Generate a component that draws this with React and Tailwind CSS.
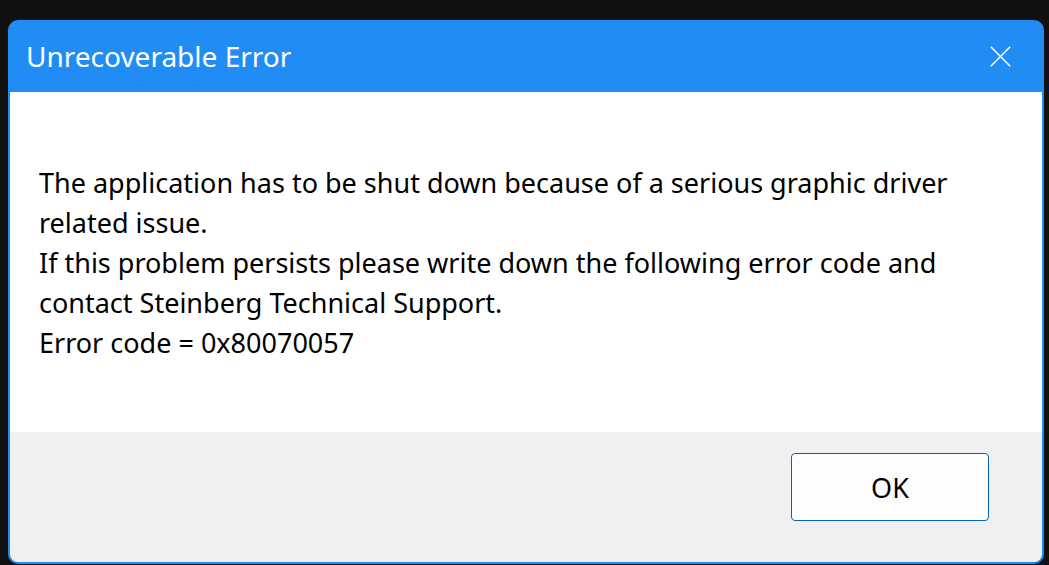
export default function App() {
    const font = {fontFamily: '"Noto Sans", "Open Sans", sans-serif'};

    return (
        <div className="w-[1049px] h-[565px] bg-[#111111] overflow-hidden" style={font}>
            <div className="ml-[8px] mt-[20px] w-[1036px] h-[544px] flex flex-col rounded-[10px] bg-[#228cf5] p-[2px] pt-0 overflow-hidden">
                {/* Title bar */}
                <div className="h-[72px] shrink-0 flex items-center justify-between pl-[16px] pr-[31px]">
                    <span className="text-white text-[28px] leading-none">Unrecoverable Error</span>
                    <svg width="21" height="21" viewBox="0 0 21 21" className="text-white">
                        <path d="M0.8 0.8 L20.2 20.2 M20.2 0.8 L0.8 20.2" stroke="currentColor" strokeWidth="1.5" fill="none"/>
                    </svg>
                </div>
                {/* Message */}
                <div className="h-[340px] shrink-0 bg-white pl-[29px] pt-[71px] text-[27px] leading-[40px] text-black">
                    <p>The application has to be shut down because of a serious graphic driver</p>
                    <p>related issue.</p>
                    <p>If this problem persists please write down the following error code and</p>
                    <p>contact Steinberg Technical Support.</p>
                    <p>Error code = 0x80070057</p>
                </div>
                {/* Footer */}
                <div className="flex-1 bg-[#f0f0f0] rounded-b-[8px] flex justify-end items-start pt-[21px] pr-[53px]">
                    <button className="w-[198px] h-[68px] pt-[3px] rounded-[4px] border border-[#0067c0] bg-[#fdfdfd] text-[27px] text-black">
                        OK
                    </button>
                </div>
            </div>
        </div>
    );
}
